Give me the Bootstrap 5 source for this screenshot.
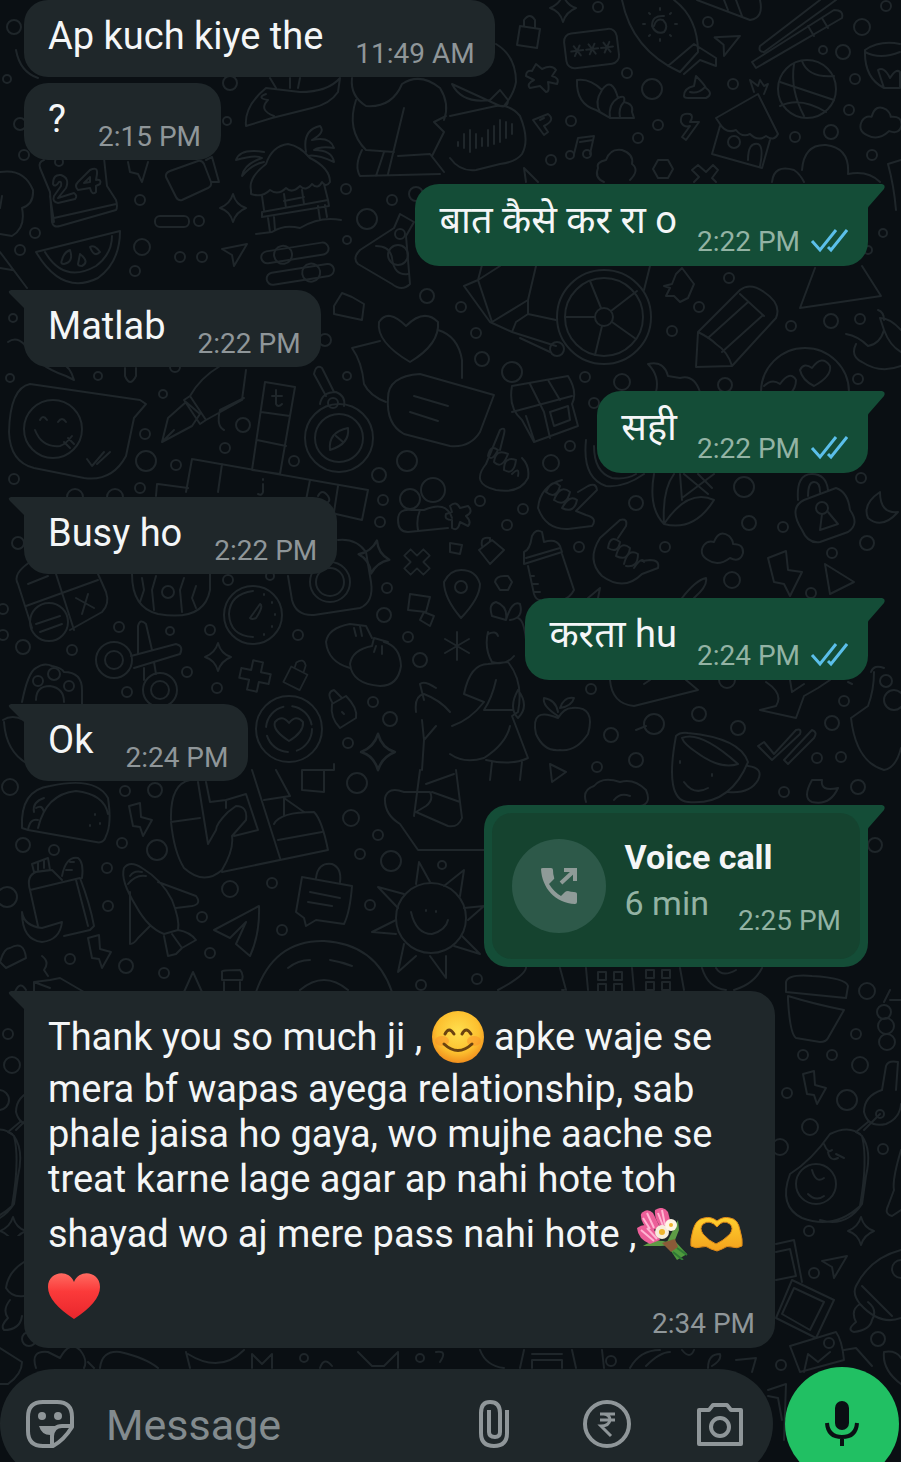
<!DOCTYPE html>
<html lang="hi">
<head>
<meta charset="utf-8">
<meta name="viewport" content="width=device-width, initial-scale=1">
<title>Chat</title>
<link href="https://cdn.jsdelivr.net/npm/bootstrap@5.3.0/dist/css/bootstrap.min.css" rel="stylesheet">
<style>
  :root { --night:#0a0f13; --in:#1f272a; --out:#144d37; --muted:#8f9699; }
  body { background:var(--night); color:#f4f6f7; font-family:Roboto,"Noto Sans Devanagari","Noto Sans",sans-serif; }
  .screen { height:100vh; }
  .wallpaper { z-index:0; }
  .thread { padding:0 33px 19px 24px; }
  .run { gap:6px; }
  .bubble { position:relative; border-radius:24px; font-size:38px; line-height:45px; }
  .bubble-in { background:var(--in); padding:14px 20px 6px 24px; align-self:flex-start; }
  .bubble-out { background:var(--out); padding:14px 20px 7px 24px; align-self:flex-end; }
  .bubble-in.tail { border-top-left-radius:0; }
  .bubble-out.tail { border-top-right-radius:0; }
  .tail::before { content:""; position:absolute; top:0; width:18px; height:24px; background:inherit; }
  .bubble-in.tail::before { left:-16px; clip-path:path("M18 0H3Q-1 1 2 4L16 18L18 20Z"); }
  .bubble-out.tail::before { right:-17px; clip-path:path("M0 0H15Q19 1 17 5L3 21Q1 23 1 24H0Z"); }
  .time { font-size:28px; line-height:34px; color:var(--muted); white-space:nowrap; }
  .bubble-out .time { color:#93b3a4; }
  .with-time { gap:32px; }
  .with-time .time { margin-top:23px; }
  .bubble-out.with-time { gap:20px; }
  .bubble-out.with-time .time { margin-top:27px; }
  .bubble-out .words { height:45px; }
  .ticks { width:38px; height:26px; margin-left:10px; }
  .bubble-in.long { max-width:751px; padding-bottom:7px; }
  .long .time { float:right; margin-top:43px; }
  .emo { width:53px; height:52px; margin:6px 0 4px; vertical-align:-17px; }
  .bubble-out.call { padding:8px; }
  .call-panel { background:#15432f; border-radius:20px; padding:21px 19px 21px 20px; gap:19px; }
  .call-icon { width:94px; height:94px; margin:5px 0; background:#2d5949; }
  .call-text { font-size:34px; line-height:46px; }
  .call-text .fw-bold { width:max-content; margin-right:-80px; }
  .call-text .sub { color:#93b3a4; }
  .call-text .time { margin-left:29px; }
  .composer { gap:12px; padding-right:2px; }
  .pill { background:var(--in); border-radius:55px; height:110px; padding:0 29px 0 26px; margin-top:2px; gap:65px; }
  .pill .tool { width:48px; height:48px; color:var(--muted); }
  .msg-input { background:none; border:0; outline:0; color:#f4f6f7; font-size:43px; line-height:50px; padding:2px 0 0; margin-left:-33px; min-width:0; }
  .msg-input::placeholder { color:#838b8e; opacity:1; }
  .mic { width:114px; height:114px; background:#21c063; color:var(--night); }
</style>
</head>
<body>
<div class="screen d-flex flex-column position-relative overflow-hidden">

<svg class="wallpaper position-absolute top-0 start-0 w-100 h-100" viewBox="0 0 901 1462" preserveAspectRatio="xMinYMin slice" aria-hidden="true">
<defs>
  <g id="bolt"><path d="M0 2L11-1L12 13L23 16L14 32L11 23L4 22Z"/></g>
  <g id="spark"><path d="M0-14Q3-3 13 0Q3 4 0 14Q-3 3-13 0Q-3-4 0-14Z"/></g>
  <g id="plane"><path d="M0 5L25 0L12 22L10 11Z"/></g>
  <g id="cross"><path d="M-5-15H5V-5H15V5H5V15H-5V5H-15V-5H-5Z"/></g>
  <g id="lock"><path d="M0 10L20 13L17 32L-3 29ZM4 10V4Q10-4 15 4V12"/></g>
  <g id="cloud"><path d="M6 24Q-4 18 2 9Q6 4 12 6Q17-7 27 0Q31 4 31 8Q42 8 41 17Q38 27 28 22Q16 31 6 24Z"/></g>
  <clipPath id="lower-edge"><rect x="848" y="1000" width="53" height="236"/></clipPath>
</defs>
<g id="doodles" fill="none" stroke="#1f262a" stroke-width="2" stroke-linejoin="round" stroke-linecap="round">
  <g id="dots"></g>
  <!-- left column, upper -->
  <path d="M16 50Q20 72 38 78M0 172Q24 168 33 190Q34 204 22 208Q26 228 12 236L0 234M2 196L0 208M0 252L27 288M0 268L12 270"/>
  <path d="M44 160Q38 162 40 168L50 192L52 222Q53 228 60 226L116 210Q118 207 116 200L107 186L104 158M50 196L54 222M54 218L116 204"/>
  <path d="M53 184Q53 174 61 175Q70 178 66 188L58 198L74 193Q78 196 75 199L58 203Q52 202 54 196L61 186Q62 181 59 182Q55 188 53 184ZM90 170Q98 166 97 174L96 180Q102 179 100 184L96 186V192Q92 196 90 188L78 190Q74 186 78 182ZM90 177L84 183L90 182Z"/>
  <path d="M128 162L130 172L138 174L142 182L148 162M170 171L198 161Q202 160 204 164L211 182Q212 186 208 188L182 200Q178 201 176 197L166 177Q165 173 170 171ZM206 160L212 157L219 182L211 182"/>
  <path d="M36 252L120 231Q120 262 98 278Q62 296 36 252ZM45 252Q64 284 96 266Q112 254 112 236M62 260Q64 252 70 250Q74 262 64 264Q60 264 62 260ZM78 264L80 254Q90 262 82 266Q78 266 78 264ZM90 247Q94 244 100 252Q94 258 90 247Z"/>
  <rect x="155" y="216" width="34" height="11" rx="5"/>
  <use href="#spark" x="233" y="208"/><use href="#plane" x="222" y="244"/>
  <path d="M251 190Q248 178 266 164Q272 146 288 144Q300 146 310 158Q330 168 330 182Q326 188 322 182Q318 190 312 184Q306 192 300 186Q292 194 286 188Q278 196 270 190Q262 198 251 194ZM262 196L264 210M324 184L328 200M262 212L328 200L329 206L262 217ZM284 194L286 208M302 190L304 204M284 201L304 197M268 218L270 232M274 217L275 230M318 206L320 220M325 205L327 217M256 234L272 232Q284 224 300 228Q320 216 341 220"/>
  <path d="M264 152Q240 148 236 160Q256 154 262 158Q244 164 242 176Q252 164 264 162M306 152Q302 130 320 126Q326 132 312 140Q330 136 334 148Q320 146 314 150Q332 150 334 162Q316 154 308 156"/>
  <path d="M246 126Q244 106 266 88L300 92Q328 92 340 78L338 92Q330 104 312 108L272 118ZM266 94Q256 98 268 100Q258 110 274 116M270 78L276 88M290 78V88M300 78L298 88"/>
  <g transform="rotate(-9 295 260)"><rect x="262" y="247" width="68" height="12" rx="6"/><circle cx="284" cy="253" r="9"/><rect x="264" y="269" width="68" height="12" rx="6"/><circle cx="309" cy="275" r="9"/></g>
  <path d="M352 78Q350 96 366 106Q392 108 402 84Q420 72 440 88Q450 104 444 120M356 100Q346 130 366 150L394 152M362 150Q354 166 360 176L440 174M384 152L376 176M404 108L388 174M398 156L430 154L444 172M446 116L434 122L444 132L432 156"/>
  <path d="M400 214L414 222L406 236L410 284Q402 292 392 284L358 264Q352 258 360 250L394 228ZM376 246Q390 246 392 258Q394 276 408 274"/><circle cx="400" cy="234" r="5"/><circle cx="398" cy="255" r="10"/>
  <path d="M334 306L342 293L352 297L364 304L362 320L334 314Z"/>
  <!-- top centre -->
  <use href="#spark" x="563" y="8"/><use href="#lock" x="520" y="16"/>
  <g transform="rotate(-7 592 48)"><rect x="565" y="31" width="53" height="35" rx="8"/><path d="M571 49H583M574 44L580 54M580 44L574 54M586 49H598M589 44L595 54M595 44L589 54M601 49H613M604 44L610 54M610 44L604 54"/></g>
  <path d="M622 0Q632 50 680 72L698 52Q698 18 674 0M668 66L694 44L716 58V66L700 60L684 74M654 26Q656 18 663 20Q669 26 664 32Q656 35 652 26Q652 15 664 16M660 8V10M660 39V41M643 24H645M675 24H677M649 13L650 14M671 13L670 14M649 36L650 35M671 36L670 35"/>
  <path d="M697 0L750 20Q764 18 760 0M736 0L742 16M724 0L728 10"/><use href="#plane" x="714" y="34" transform="rotate(8 726 42)"/>
  <path d="M820 0L760 46Q758 52 764 52L836 0M752 62L834 10Q844 10 842 18L756 68ZM808 26L814 36M822 18L828 28"/>
  <circle cx="807" cy="89" r="29"/><path d="M780 82L834 100M802 61Q808 78 834 76M794 64Q790 90 804 116M780 106Q800 96 826 112"/>
  <path d="M865 50Q880 40 900 44M865 50Q864 78 884 88H900M865 52Q880 60 900 52M878 70Q884 66 890 78Q896 68 900 72V88H884Z"/>
  <use href="#cloud" x="860" y="110" transform="rotate(-6 880 120)"/>
  <path d="M526 76Q526 70 532 71L536 64L542 69Q552 64 556 70L552 76Q560 78 557 84L548 82Q550 92 546 92L540 86L530 88Q526 84 534 80Z"/>
  <path d="M577 80Q590 78 602 90Q612 76 618 98Q626 94 624 102Q634 104 632 112L634 118L610 118Q600 112 596 110Q576 104 577 80ZM602 90Q594 102 600 112M618 98Q608 104 610 118M624 102Q618 108 620 118"/>
  <path d="M533 120L548 114Q556 120 544 126L548 132L544 135ZM540 120L544 118M681 122Q680 112 690 114Q694 116 690 122L699 122L686 140L682 137L690 126Q684 128 681 122ZM684 96Q684 88 694 86L696 76Q704 84 706 88Q714 94 706 98H688Q684 98 684 96ZM690 92Q698 94 704 88"/>
  <path d="M450 116L496 106Q510 104 520 116Q530 140 522 154Q516 162 500 164L476 170Q460 172 450 158M458 142V146M464 134V148M470 130V152M476 134V148M482 138V146M488 130V146M494 126V144M500 120V142M506 122V138M512 124V134"/><path d="M496 44Q516 56 516 82Q514 94 504 106M452 84Q462 104 490 100L500 90L508 100Q508 108 500 106Z"/>
  <path d="M574 154L578 138L594 136L590 154M580 142L593 140"/><circle cx="570" cy="155" r="4"/><circle cx="587" cy="154" r="4"/>
  <path d="M604 182Q594 178 598 168Q596 162 606 160Q610 148 622 150Q634 154 632 164Q640 170 630 180M526 182L524 168L538 182M658 160H668L673 169L668 178H658L653 169Z"/>
  <path d="M692 170L698 165L706 172L713 165L718 170L712 178L716 182M692 170L699 177L694 182"/>
  <path d="M716 118L758 94L778 134Q774 142 766 136Q758 142 750 134Q742 138 736 130Q726 134 720 124ZM720 126L712 154L762 168L770 140M748 160Q748 142 758 144Q764 146 760 166M754 92L750 80L758 86L760 80L764 86L768 84L764 94"/><circle cx="734" cy="142" r="6"/>
  <path d="M772 182Q774 164 794 170Q800 174 804 182M802 170Q804 144 826 145Q850 148 848 174Q868 170 880 182M901 160L888 164Q894 186 896 210"/>
  <!-- wheelchair, pencil, mountains -->
  <circle cx="604" cy="317" r="47"/><circle cx="604" cy="317" r="39"/><circle cx="604" cy="317" r="9"/><path d="M601 308L590 281M611 311L637 291M612 322L636 339M602 326L595 355M595 317H565"/>
  <path d="M464 286L478 280L492 322L528 300L536 266M464 286L490 322L512 332L556 346M482 265L478 280L500 266M528 300V314L556 320M512 332L516 322L528 314M520 338L550 352M644 290L650 266"/><circle cx="557" cy="349" r="7"/>
  <path d="M698 332L740 290Q750 282 764 292Q782 304 776 318L732 366L696 367ZM698 332Q710 338 716 344Q728 352 732 366M740 294L764 316M708 338L748 302M722 352L762 316"/>
  <path d="M664 286L672 284L676 274L682 268L694 284L688 298L680 302L674 296L666 296L670 288ZM815 268L800 308L881 296L862 266"/>
  <circle cx="805" cy="392" r="44"/><path d="M800 370Q804 362 812 368Q822 354 830 366Q832 376 814 386Q802 380 800 370ZM764 386Q772 378 780 384Q790 370 796 380Q796 388 790 394"/>
  <path d="M846 334Q858 336 868 346Q880 344 884 330L880 318Q890 318 901 330M856 344Q850 356 862 362Q880 374 901 366M884 330Q890 346 901 352M878 310Q884 312 884 320"/>
  <path d="M648 364Q664 360 668 376L680 378Q694 374 700 392M648 364Q660 376 656 392"/>
  <path d="M410 362Q376 342 379 322Q388 308 406 326Q424 308 438 322Q440 344 410 362ZM380 341L352 348Q362 362 364 384Q370 396 386 402M438 330Q458 336 462 360V378"/>
  <path d="M388 398Q388 376 420 374L494 395L480 432Q470 448 450 446L404 434Q386 424 388 398ZM414 396L448 406M410 412L438 421"/>
  <path d="M512 386L568 376Q578 392 572 404L578 426L534 442L522 420Q508 408 512 386ZM512 412L572 396M530 384L544 412L550 438M548 380L560 400M526 416L534 440M550 412L568 406L570 420L554 426Z"/>
  <!-- left middle -->
  <path d="M8 342Q16 336 24 344Q36 366 66 376L74 380Q70 366 62 364M125 368V376Q130 388 136 376V368"/>
  <path d="M30 384Q10 388 9 432Q10 462 34 468L84 478Q112 482 126 456L134 418L146 404L140 400Z"/><circle cx="53" cy="429" r="29"/><path d="M35 430Q42 448 60 446Q66 444 72 436M40 420Q43 414 47 420M58 422Q62 416 66 422M64 442L70 448M68 438L74 444M87 459L92 466L104 452M97 464L110 452"/>
  <path d="M162 442L168 418L186 402L200 414L192 426ZM184 400L190 396L206 420L200 424ZM190 396Q200 378 220 366M246 370L242 400L206 420M244 398L220 410Q216 426 224 430M162 442L174 430"/>
  <path d="M265 382L295 387L280 474L252 470ZM261 412L290 416M257 440L286 446M192 459L368 490L362 520L336 514M192 459L186 492M222 464L218 492M310 480L306 500M338 486L334 512M158 484L188 488M157 484L156 496"/><path d="M276 390V404Q278 408 282 404M272 396H282M263 484V492Q262 496 258 494M263 479V480M318 496Q322 488 328 496Q332 502 324 504"/>
  <circle cx="339" cy="438" r="34"/><circle cx="339" cy="438" r="24"/><path d="M330 450Q328 432 348 428Q350 444 330 450ZM336 436L343 442M320 404Q322 392 336 392Q346 396 344 406M326 396L314 374Q316 364 322 368L334 392"/><circle cx="333" cy="403" r="5"/>
  <path d="M398 520Q398 508 412 510H424Q446 500 452 518M398 520Q398 532 408 532L448 528M420 510Q416 520 418 530"/><circle cx="410" cy="499" r="10"/><circle cx="433" cy="490" r="12"/>
  <use href="#spark" transform="translate(374 557) rotate(10) scale(1.2)"/><use href="#cross" transform="translate(417 562) rotate(45) scale(.9)"/>
  <path d="M18 584Q12 574 30 562M18 584L32 628M70 630L102 612Q110 604 106 592L98 574M26 606L98 580M56 574L74 630M28 584L48 576M76 598L94 608M88 594L82 614M36 624L60 616M40 632L62 624"/><circle cx="49" cy="622" r="19"/>
  <path d="M132 574Q132 608 158 614Q204 622 210 590V574M142 578L144 590L140 602M156 576L152 590L154 610M184 578L180 590L182 612M196 586L192 598L196 608"/><circle cx="168" cy="592" r="6"/>
  <circle cx="253" cy="615" r="29"/><path d="M253 591Q230 594 229 614Q230 636 253 637M250 618L260 604Q264 606 256 618Q252 620 250 618M264 594V595M272 602V603M275 614V615M272 626V627M264 634V635"/>
  <circle cx="330" cy="582" r="20"/><circle cx="330" cy="582" r="14"/><path d="M288 576L292 600Q296 616 314 615L360 608Q374 602 371 582L366 552Q356 538 338 540"/>
  <path d="M410 594L430 597L426 612L408 610ZM424 612L434 616L430 626L420 620Z"/><use href="#spark" x="218" y="657"/><use href="#cross" transform="translate(255 676) rotate(12)"/><use href="#lock" transform="translate(294 658) rotate(18) scale(.9)"/>
  <circle cx="114" cy="660" r="18"/><circle cx="114" cy="660" r="9"/><circle cx="160" cy="690" r="17"/><circle cx="160" cy="690" r="9"/><path d="M131 656L176 644Q184 646 180 654L134 668M138 654V626Q140 618 146 624L152 650M144 668V680M154 662L156 674"/>
  <path d="M22 702Q28 672 36 668Q44 662 52 666Q62 668 64 672Q82 672 82 690V704M36 700Q36 686 50 686Q64 688 64 702"/><circle cx="38" cy="681" r="5"/><circle cx="54" cy="674" r="6"/><circle cx="69" cy="686" r="5"/><path d="M3 720Q12 714 24 720M4 722Q6 752 28 764"/>
  <path d="M350 668Q328 662 326 642Q328 628 350 624L366 626L372 638"/><path d="M384 642Q400 646 401 666Q398 686 380 686Q352 684 350 664Q352 650 372 646L374 638L388 642ZM354 628L356 636M360 626L362 636M376 646L374 652M382 646V654"/>
  <circle cx="289" cy="729" r="33"/><circle cx="289" cy="729" r="23" stroke-dasharray="28 9"/><path d="M289 741Q272 730 275 722Q282 714 289 723Q296 714 303 722Q304 732 289 741ZM332 704L346 696Q358 708 356 718L340 728Q330 718 332 704ZM332 702Q326 692 334 690L342 698M342 712L344 714"/>
  <use href="#spark" transform="translate(378 752) scale(1.3)"/><path d="M457 632V660M445 639L469 653M469 639L445 653"/>
  <!-- hands, bottle, corn, padlock -->
  <path d="M486 464L500 430Q506 426 504 434L500 450M486 464Q470 484 496 490Q520 494 528 478Q530 466 522 458M488 456Q490 444 498 450Q492 462 488 456M494 462Q496 448 508 454Q502 470 494 462M504 470Q504 456 516 460Q514 476 504 470M512 474Q520 466 518 476"/>
  <path d="M562 480Q540 486 538 508Q546 530 568 529L592 526Q598 518 586 515L576 511L597 490Q596 482 588 486L578 492M546 492Q552 478 560 486Q556 500 546 492M554 500Q560 484 570 492Q566 508 554 500M562 508Q570 494 577 500Q574 514 562 508"/>
  <path d="M600 538L620 520Q628 518 626 526L618 538M600 538Q586 560 602 576Q624 592 642 574L658 568Q660 560 650 560L642 561M608 548Q610 534 620 542Q618 554 608 548M616 556Q620 540 630 548Q628 562 616 556M624 564Q628 548 638 554Q638 568 626 566M634 568Q642 556 644 562"/>
  <path d="M586 440Q582 478 606 486Q624 488 644 474M594 446Q594 472 612 478Q626 480 636 474M654 474Q648 508 664 524Q694 532 714 500Q688 488 664 524M664 524Q662 490 674 474M684 474L708 494M698 474L712 488M714 474L682 498M682 500L680 474"/>
  <path d="M798 500Q796 474 812 474Q826 474 828 490M808 496Q808 482 814 482Q820 482 820 492M804 500L836 488Q848 492 850 510Q860 524 848 532L820 542Q808 544 802 530Q788 508 804 500ZM822 514L820 530L838 524L828 512"/><circle cx="822" cy="508" r="6"/>
  <path d="M880 492Q862 504 868 518Q882 530 898 512Q880 514 880 492Z"/><use href="#cloud" x="702" y="536"/><path d="M768 558L786 551L788 570L802 572L790 596L784 584L774 582Z"/><path d="M825 564L854 582L830 594Z"/>
  <path d="M524 552Q530 550 532 536Q536 528 542 532L544 542Q556 538 560 546L562 552L524 564ZM528 566L534 594Q536 600 540 600M562 554L574 590Q570 598 562 600M526 558L560 548M530 576H534M532 584H538M534 592H540"/>
  <path d="M479 550L492 540L504 550L490 564ZM482 546Q480 536 490 538V541M450 543L462 545L460 554L450 552ZM495 582Q496 576 504 576H508L512 582L508 590H500ZM461 618Q444 598 444 582Q450 570 461 570Q476 570 480 584Q480 598 461 618ZM682 598Q696 580 706 578Q708 586 694 598M588 598L600 588L598 598"/><circle cx="461" cy="587" r="6"/>
  <path d="M450 506Q456 500 460 508L468 506Q474 512 466 516Q472 522 468 526L460 522Q458 532 452 528V520Q444 520 446 514L452 512Z"/>
  <!-- walking figure, apple, cup -->
  <path d="M506 620L492 616Q488 604 496 602Q508 606 506 620Q512 600 520 604Q524 618 510 620M488 632Q484 648 492 662Q506 666 514 656M518 618Q524 620 526 640M488 634Q496 630 498 636M464 694Q470 664 488 664L508 662Q524 682 518 712L512 716L528 758Q512 766 486 760M464 694L484 702Q470 720 452 726M496 680Q492 698 484 710L512 710M450 754Q464 764 484 758Q506 744 510 726M492 762L490 780M522 762L520 780M518 690Q530 706 518 718Q508 708 518 690"/>
  <path d="M420 684Q424 680 436 688M420 684L424 700M416 712Q414 696 424 694Q440 700 450 712M422 720L424 740L436 726M424 740L422 770M385 798Q388 786 404 792L430 792Q434 800 426 806L416 812M385 798Q384 814 400 824L418 850H540M416 812L448 826Q458 828 462 818L456 770M420 770L414 816M426 784L454 774M432 792L460 802"/>
  <path d="M558 718Q530 706 536 734Q544 752 560 750Q576 752 588 734Q596 706 572 708Q564 708 558 718ZM558 716Q542 706 544 698Q556 700 558 712M560 708Q564 696 574 698Q572 706 560 708"/>
  <path d="M610 680Q612 704 634 706L698 690L686 680M644 684L650 680M766 682Q784 694 776 706L760 710L796 718L804 696L818 688L830 680M790 680L792 692L804 684M848 682L852 684M636 730L646 726"/>
  <path d="M676 736Q664 800 688 802Q730 806 748 762Q740 738 688 733Q680 732 676 736ZM682 738Q700 730 738 764Q720 770 696 752Q684 744 682 738ZM748 766Q764 768 758 780Q750 794 728 792M684 782Q694 796 708 788M680 761V763M712 774V776"/>
  <path d="M758 746L764 742L774 754L796 730Q802 728 800 734L772 760ZM784 760L812 730Q818 732 814 738L788 764ZM871 672Q874 664 884 668M874 672Q874 690 868 706L851 718Q856 762 884 770Q896 768 901 748"/><circle cx="886" cy="681" r="6"/><circle cx="894" cy="700" r="10"/>
  <path d="M550 764L566 772L552 782ZM586 802Q582 790 594 786Q602 776 620 782Q634 778 646 790Q652 804 640 806M614 800Q620 792 630 796M812 780Q802 798 812 802Q830 806 838 788Q820 792 822 780Z"/>
  <!-- lower left -->
  <path d="M22 828Q20 790 50 786Q96 776 108 798Q112 824 106 836Q104 844 96 842L28 830ZM38 828Q46 794 76 791Q104 794 108 814M44 798Q32 802 34 812M36 808Q42 804 44 812M28 830Q30 818 38 820M95 814V815M100 823V824M90 825V826"/>
  <use href="#bolt" x="129" y="804"/><use href="#bolt" x="88" y="936"/>
  <path d="M171 820Q170 784 190 780M171 822Q174 852 184 868Q204 886 222 870Q234 850 232 836L246 820Q248 806 236 806L228 812Q216 824 216 830L208 844L198 782M171 822L200 818M206 782L210 802L226 800V808M226 800L246 794L258 830L234 836M252 770L280 858M276 770L290 796L264 800M284 816V798L304 812M274 824Q280 812 314 812Q322 820 328 850L222 872M278 840L322 832"/>
  <path d="M302 770H324V792L302 790ZM324 770H334V764"/>
  <path d="M30 890L80 878Q90 904 94 926L90 930L64 936M30 890Q26 876 36 872L52 870L62 880M32 864L48 858L50 870L34 872ZM62 876Q66 856 78 858Q84 862 82 878M30 890L38 926M76 880L88 926M22 912Q24 926 42 928L62 922Q60 940 42 942Q22 940 22 912ZM38 862V870M44 860V868M66 870H72M70 862H74"/>
  <path d="M124 868Q130 860 142 868Q162 880 172 900Q180 920 178 930L164 934Q148 928 136 906Q120 880 124 868ZM128 884Q136 874 146 876M130 876Q134 870 142 872M158 882L196 896Q202 904 192 906L176 908M130 892V944Q134 944 138 938L150 926M164 936L168 956L176 954L182 948L196 940Q190 932 178 930M172 934L182 948"/>
  <path d="M214 930L259 906Q260 934 250 956L236 944L246 922L230 938Z"/>
  <path d="M302 877L352 886Q350 912 344 924L316 920L306 926L304 918L296 912ZM316 878Q318 862 332 864Q342 868 340 882M310 892L340 898M308 902L332 906"/>
  <circle cx="431" cy="918" r="35"/><path d="M411 912Q416 934 432 934Q446 930 448 920M426 910V911M436 911V912M416 884L419 862L430 882M444 886L464 870L460 896M464 908L484 906L468 920M404 894L378 887L398 908M396 920L372 932L396 934M404 944L398 972L416 956M430 956L446 978V956M462 936L480 954L454 946"/>
  <path d="M0 962Q4 948 10 948Q24 940 26 958L6 968ZM42 956Q50 962 44 970L48 976M34 992V982L50 980L60 978L84 992M34 982L50 988M184 992L193 972L202 992M222 972Q220 970 240 970Q244 974 242 980H222ZM224 982V992M240 982V992M15 992Q20 980 26 990M256 992Q274 940 324 941Q376 944 392 992M300 990Q324 970 348 990M288 968Q298 960 310 960M330 960Q342 962 352 966"/>
  <!-- lower right -->
  <path d="M498 990Q528 974 526 966M562 990L564 990M560 968L566 990M586 968L588 990M632 968L634 990M680 968L684 990M598 972H606V980H598ZM614 972H622V980H614ZM598 984H606V992H598ZM614 984H622V992H614ZM646 970H654V978H646ZM662 970H670V978H662ZM646 982H654V990H646ZM662 982H670V990H662ZM702 968Q708 988 726 990M734 990Q754 984 762 968M716 968Q722 978 736 970"/>
  <path d="M786 982Q788 974 812 976Q846 978 848 986L846 998L786 992ZM788 996Q814 1004 844 1010L828 1038Q826 1042 820 1042L796 1038Q790 1034 788 1000Z"/>
  <use href="#bolt" x="803" y="1072"/><path d="M890 990L884 1002M901 1000H890"/><circle cx="884" cy="1012" r="7"/><circle cx="886" cy="1026" r="8"/><circle cx="887" cy="1042" r="8"/>
  <path d="M882 1090L886 1066Q888 1060 898 1062L896 1090M882 1090Q864 1096 864 1112Q868 1128 886 1124Q900 1118 901 1104M868 1122L856 1132L860 1134M880 1114L864 1130"/><circle cx="880" cy="1114" r="4"/>
  <path d="M862 1136Q850 1124 830 1134Q812 1160 790 1174Q778 1206 802 1218Q834 1230 860 1206Q868 1160 862 1136ZM862 1136Q872 1150 866 1176L862 1204Q846 1228 820 1220M824 1144Q828 1154 832 1150M828 1152Q830 1162 838 1158M836 1154L844 1158"/><circle cx="816" cy="1184" r="20"/><path d="M812 1170Q816 1184 824 1178M808 1194Q816 1202 824 1196"/>
  <use href="#spark" x="861" y="1231"/><path d="M901 1150Q892 1180 894 1190L888 1206Q884 1214 892 1216L901 1210"/>
  <path d="M776 1244L794 1240L802 1282M776 1252L790 1249L796 1276L776 1280M792 1280L834 1300L816 1338L776 1318ZM794 1288L824 1302L810 1330L782 1314ZM790 1346L836 1332Q842 1340 844 1360L800 1372ZM804 1372L808 1354L818 1362L830 1352M844 1350L856 1348L872 1366"/><circle cx="829" cy="1343" r="5"/><use href="#plane" x="822" y="1256"/>
  <path d="M901 1250Q870 1258 856 1286Q852 1294 860 1304Q880 1326 901 1318M862 1286L892 1316M860 1304Q850 1310 856 1322Q846 1330 854 1332Q870 1330 872 1320Q878 1310 868 1302"/><circle cx="901" cy="1269" r="9"/>
  <path d="M884 1352Q896 1350 901 1358M884 1352Q882 1370 901 1384M768 1390L786 1384L784 1440M768 1396L778 1398L782 1420"/>
  <!-- strip between last bubble and composer -->
  <path d="M36 1368Q30 1350 48 1352L60 1358Q70 1340 80 1350Q88 1360 84 1368M88 1362L94 1368M100 1368Q102 1350 120 1352Q146 1358 158 1368M186 1352L190 1368M188 1354Q220 1374 244 1350M252 1368V1354L262 1364L272 1354V1368M320 1368Q324 1356 332 1366M358 1352L372 1366L384 1366L398 1352V1368M436 1352Q448 1350 440 1362M480 1350Q486 1366 504 1368M524 1350L520 1368M532 1354H562M532 1368V1360H562V1368M572 1350L576 1368M602 1350L604 1368M630 1368Q640 1350 660 1350M646 1366Q660 1352 670 1352M682 1350Q690 1360 694 1350M708 1368Q708 1354 720 1354Q722 1360 712 1366M736 1360L756 1358L752 1372"/>
  <path d="M0 1348L22 1362Q22 1374 8 1384H0M24 1262Q8 1272 6 1288Q12 1298 24 1296M10 1300Q2 1310 8 1318Q0 1326 4 1330Q20 1330 22 1316"/><circle cx="29" cy="1339" r="7"/>
</g>
<g transform="translate(-848 0)"><g clip-path="url(#lower-edge)"><use href="#doodles"/></g></g>
</svg>

<main class="thread position-relative d-flex flex-column flex-shrink-0 gap-4">
  <div class="run d-flex flex-column">
    <div class="bubble bubble-in with-time d-flex"><span>Ap kuch kiye the</span><time class="time">11:49 AM</time></div>
    <div class="bubble bubble-in with-time d-flex"><span>?</span><time class="time">2:15 PM</time></div>
  </div>

  <div class="bubble bubble-out tail with-time d-flex"><span class="words">बात कैसे कर रा o</span><span class="time d-flex align-items-center"><time>2:22 PM</time><svg class="ticks" viewBox="0 0 38 26" role="img" aria-label="Read"><g fill="none" stroke="#5bbfea" stroke-width="3"><path d="M2 12L10 21L26 1M18 18L21 21L37 1"/></g></svg></span></div>

  <div class="bubble bubble-in tail with-time d-flex"><span>Matlab</span><time class="time">2:22 PM</time></div>

  <div class="bubble bubble-out tail with-time d-flex"><span class="words">सही</span><span class="time d-flex align-items-center"><time>2:22 PM</time><svg class="ticks" viewBox="0 0 38 26" role="img" aria-label="Read"><g fill="none" stroke="#5bbfea" stroke-width="3"><path d="M2 12L10 21L26 1M18 18L21 21L37 1"/></g></svg></span></div>

  <div class="bubble bubble-in tail with-time d-flex"><span>Busy ho</span><time class="time">2:22 PM</time></div>

  <div class="bubble bubble-out tail with-time d-flex"><span class="words">करता hu</span><span class="time d-flex align-items-center"><time>2:24 PM</time><svg class="ticks" viewBox="0 0 38 26" role="img" aria-label="Read"><g fill="none" stroke="#5bbfea" stroke-width="3"><path d="M2 12L10 21L26 1M18 18L21 21L37 1"/></g></svg></span></div>

  <div class="bubble bubble-in tail with-time d-flex"><span>Ok</span><time class="time">2:24 PM</time></div>

  <div class="bubble bubble-out tail call">
    <div class="call-panel d-flex">
      <span class="call-icon rounded-circle d-flex align-items-center justify-content-center flex-shrink-0">
        <svg width="38" height="38" viewBox="0 0 38 38" role="img" aria-label="Outgoing call"><path fill="#8f9b98" d="M1 2Q1 1 3 1H11Q13 1 13 3Q13 7 14 10Q15 12 13 13L9 17Q14 25 21 29L25 25Q26 24 28 24Q31 25 34 25Q37 25 37 27V35Q37 37 35 37C15 36 2 21 1 2Z"/><path d="M21 16L34 4M24 3H35V14" fill="none" stroke="#8f9b98" stroke-width="4"/></svg>
      </span>
      <div class="call-text d-flex">
        <div><div class="fw-bold">Voice call</div><div class="sub">6 min</div></div>
        <time class="time align-self-end">2:25 PM</time>
      </div>
    </div>
  </div>

  <div class="bubble bubble-in tail long">Thank you so much ji , <svg class="emo" viewBox="0 0 53 52" role="img" aria-label="Smiling face"><defs><radialGradient id="face" cx=".5" cy=".4" r=".62"><stop offset="0" stop-color="#ffe04f"/><stop offset=".65" stop-color="#fcc02f"/><stop offset="1" stop-color="#f08a1c"/></radialGradient></defs><circle cx="26" cy="26" r="26" fill="url(#face)"/><ellipse cx="10" cy="30" rx="7" ry="5" fill="#fa8a2a" opacity=".45"/><ellipse cx="42" cy="30" rx="7" ry="5" fill="#fa8a2a" opacity=".45"/><path d="M13 23Q17 15 22 23M30 23Q34 15 39 23M12 33Q26 46 40 33" fill="none" stroke="#6a4310" stroke-width="3" stroke-linecap="round"/></svg> apke waje se mera bf wapas ayega relationship, sab phale jaisa ho gaya, wo mujhe aache se treat karne lage agar ap nahi hote toh shayad wo aj mere pass nahi hote ,<svg class="emo" viewBox="0 0 53 52" role="img" aria-label="Bouquet"><path d="M6 38Q18 30 30 34L41 12L42 22L36 37L24 38Z" fill="#5d9b45"/><path d="M28 34L36 31L50 46L40 52Z" fill="#4f9a3d"/><path d="M25 35L38 31L41 39L34 44Z" fill="#8b5a38"/><path d="M36 44L46 52M40 40L50 47" stroke="#2f7a35" stroke-width="2"/><g fill="#ec5f99"><path d="M4 6Q10-1 16 5L23 19L14 23Q3 16 4 6Z"/><path d="M18 2Q26-3 31 4L34 16L26 21Q17 13 18 2Z"/><path d="M0 20Q8 14 16 20L23 32L13 36Q1 31 0 20Z"/></g><path d="M10 5L17 20M25 2L28 17M4 22L17 33M21 5L26 18M6 10L13 21M10 20L20 31" stroke="#ffb5d3" stroke-width="2" fill="none"/><circle cx="25" cy="24" r="7" fill="#f7eddc"/><circle cx="34" cy="17" r="6" fill="#fff6e6"/><circle cx="25" cy="24" r="3" fill="#efb52f"/><circle cx="34" cy="17" r="2" fill="#efb52f"/></svg><svg class="emo" viewBox="0 0 53 52" role="img" aria-label="Heart hands"><defs><linearGradient id="hand" x2="0" y2="1"><stop offset="0" stop-color="#ffd02e"/><stop offset="1" stop-color="#f3a11c"/></linearGradient></defs><path fill="url(#hand)" stroke="#e08a18" stroke-width="1" fill-rule="evenodd" d="M1 38Q0 32 3 22Q6 11 14 10Q21 8 27 13Q33 8 40 10Q48 11 50 22Q53 32 52 38Q47 41 42 39Q37 37 32 41L27 43L21 41Q16 37 11 39Q6 41 1 38ZM26 36Q33 33 40 26Q44 20 40 16Q33 11 27 19Q20 11 13 16Q9 20 13 26Q19 33 26 36Z"/></svg><svg class="emo" viewBox="0 0 53 52" role="img" aria-label="Red heart"><defs><linearGradient id="red" x2="0" y2="1"><stop offset="0" stop-color="#ff6a60"/><stop offset=".4" stop-color="#fb3a3a"/><stop offset="1" stop-color="#e9262c"/></linearGradient></defs><path fill="url(#red)" d="M26 49Q0 32 0 17C0 2 20-2 26 12C32-2 52 2 52 17Q52 32 26 49Z"/></svg><time class="time">2:34 PM</time></div>
</main>

<form class="composer position-relative d-flex flex-shrink-0" onsubmit="return false">
  <div class="pill d-flex align-items-center flex-grow-1 overflow-hidden">
    <button type="button" class="tool btn p-0 border-0 d-flex flex-shrink-0" aria-label="Stickers"><svg width="48" height="48" viewBox="0 0 48 48"><path d="M17 2H31Q46 2 46 17V27Q38 40 27 46H17Q2 46 2 31V17Q2 2 17 2ZM26 45V36Q27 26 36 26H45" fill="none" stroke="currentColor" stroke-width="4" stroke-linejoin="round"/><circle cx="16" cy="16" r="4" fill="currentColor"/><circle cx="32" cy="16" r="4" fill="currentColor"/><path d="M13 26H34Q27 28 26 35Q16 36 13 26Z" fill="currentColor"/></svg></button>
    <input class="msg-input flex-grow-1" type="text" placeholder="Message" aria-label="Message">
    <button type="button" class="tool btn p-0 border-0 d-flex flex-shrink-0" aria-label="Attach"><svg width="48" height="48" viewBox="0 0 48 48"><path d="M37 10V33Q37 46 24 46Q11 46 11 33V13Q11 2 20 2Q30 2 30 13V32Q30 37 25 37Q19 37 19 32V10" fill="none" stroke="currentColor" stroke-width="4"/></svg></button>
    <button type="button" class="tool btn p-0 border-0 d-flex flex-shrink-0" aria-label="Payment"><svg width="48" height="48" viewBox="0 0 48 48" fill="none" stroke="currentColor"><circle cx="24" cy="24" r="22" stroke-width="4"/><path d="M17 14H32M17 20H32M17 14H21Q27 15 27 20Q26 26 18 26L28 36" stroke-width="3"/></svg></button>
    <button type="button" class="tool btn p-0 border-0 d-flex flex-shrink-0" aria-label="Camera"><svg width="48" height="48" viewBox="0 0 48 48" fill="none" stroke="currentColor" stroke-width="4" stroke-linejoin="round"><path d="M3 10H13L17 5H31L35 10H45V44H3Z"/><circle cx="24" cy="27" r="9"/></svg></button>
  </div>
  <button type="button" class="mic btn p-0 border-0 rounded-circle d-flex align-items-center justify-content-center flex-shrink-0" aria-label="Record voice message"><svg width="34" height="46" viewBox="0 0 34 46"><rect x="10" y="0" width="14" height="29" rx="7" fill="currentColor"/><path d="M2 22Q3 36 17 36Q31 36 32 22M17 36V45" fill="none" stroke="currentColor" stroke-width="4"/></svg></button>
</form>
</div>

<script>
  // small rings scattered over the wallpaper: x, y, radius
  const rings = "14,27,7 7,79,4 24,155,5 59,162,4 230,83,7 227,121,4 20,124,6 140,200,5 199,221,5 142,247,8 180,257,5 202,257,5 135,271,5 35,233,5 20,250,5 346,189,5 392,200,5 416,194,7 367,219,10 347,240,4 427,296,7 13,318,4 10,378,4 98,376,4 163,394,4 347,376,4 325,340,6 175,367,5 598,7,5 708,22,5 862,27,8 823,50,4 843,52,7 627,73,5 652,89,10 733,84,5 855,79,5 849,110,5 571,121,5 658,125,5 638,138,5 831,132,7 795,137,5 872,155,5 551,160,5 886,6,5 883,233,4 868,250,4 729,278,5 699,307,5 791,326,5 831,321,7 860,319,5 461,307,5 476,333,5 482,359,7 512,372,10 672,331,5 585,377,5 622,382,8 858,379,5 725,385,7 145,434,5 146,461,10 243,425,7 225,448,5 176,465,5 294,461,5 140,488,5 14,479,5 379,475,7 407,461,10 383,500,5 380,522,5 75,497,8 115,497,8 18,543,6 228,580,5 270,576,4 387,588,5 384,615,7 3,609,5 3,635,5 23,647,7 72,650,5 119,627,5 170,631,4 210,630,5 298,635,5 408,637,5 420,660,7 187,672,5 127,692,5 217,688,5 373,702,5 390,719,7 348,743,5 594,403,5 570,446,5 551,463,8 480,501,5 523,509,5 507,525,5 636,503,7 579,547,5 665,547,5 744,487,10 749,523,7 783,527,5 861,478,5 867,543,7 832,553,5 732,580,8 811,593,5 591,689,5 727,680,8 699,714,7 654,724,10 738,728,7 611,735,7 636,760,7 597,767,5 844,701,5 832,723,7 817,758,5 841,757,5 10,787,8 125,791,5 155,790,7 357,783,10 351,818,8 378,835,5 23,845,7 54,850,5 122,843,5 157,850,10 107,868,5 108,906,5 7,897,10 230,889,8 272,883,5 360,854,5 391,861,10 442,865,4 370,905,5 202,917,5 282,930,5 210,953,5 70,959,5 126,966,7 164,973,5 421,985,5 784,792,5 858,787,7 875,845,7 477,979,5 867,991,8 856,1034,5 803,1055,5 832,1055,5 860,1065,8 787,1093,5 847,1100,10 810,1127,8 780,1147,8 883,1149,5 809,1231,5 814,1273,5 878,1339,7 781,1365,5 611,1361,5 304,1358,4 420,1358,4";
  document.getElementById("dots").innerHTML = rings.split(" ").map(r => {
    const [x, y, n] = r.split(",");
    return `<circle cx="${x}" cy="${y}" r="${n}"/>`;
  }).join("");
</script>
<script src="https://cdn.jsdelivr.net/npm/bootstrap@5.3.0/dist/js/bootstrap.bundle.min.js"></script>
</body>
</html>
